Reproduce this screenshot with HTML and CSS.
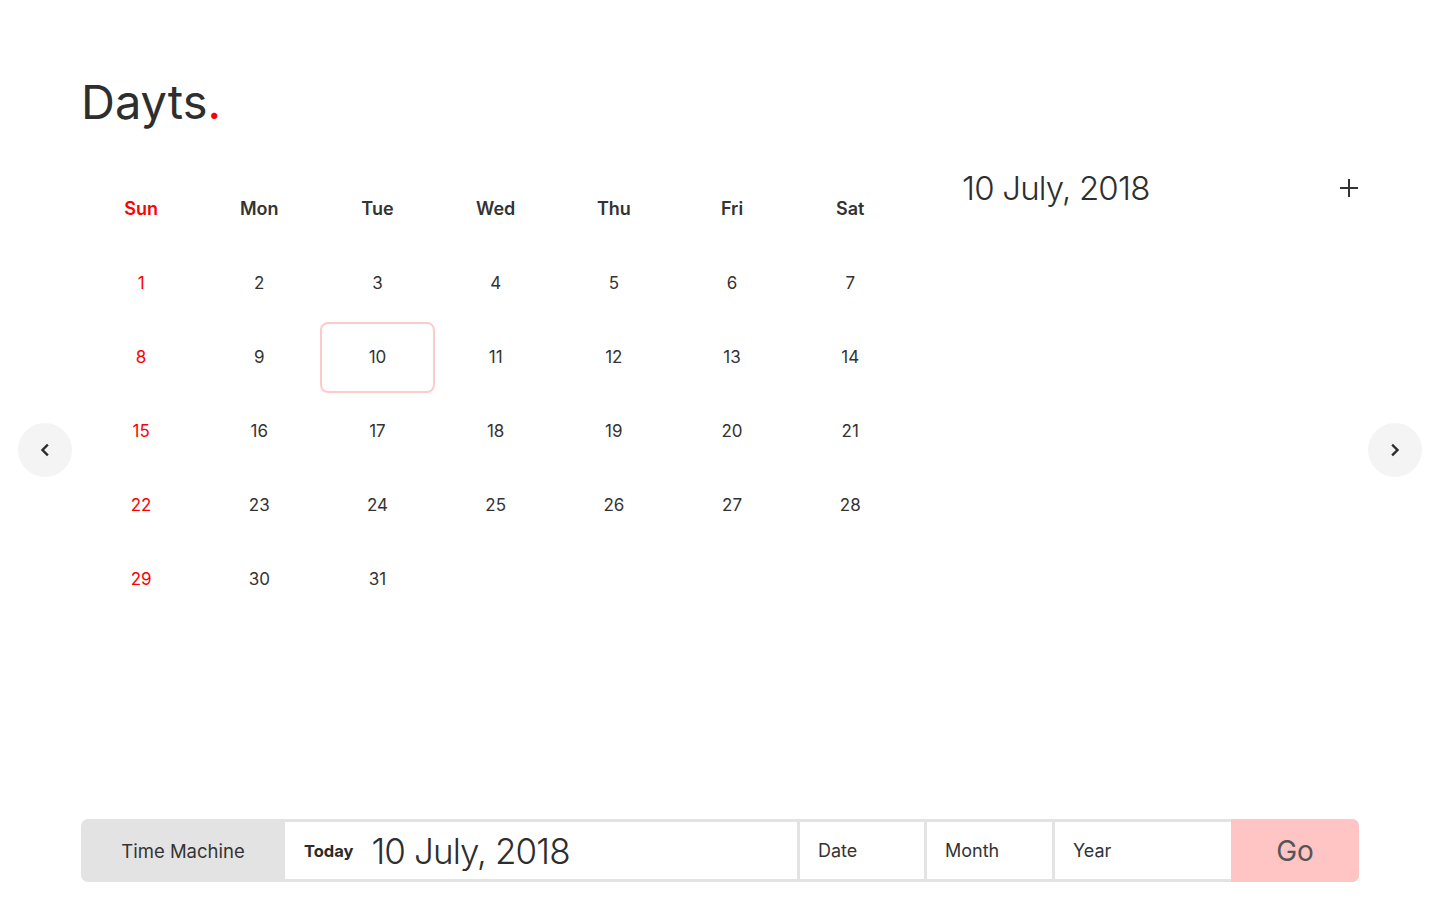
FILE: index.html
```html
<!DOCTYPE html>
<html lang="en">
<head>
<meta charset="utf-8">
<title>Dayts.</title>
<link rel="stylesheet" href="styles.css">
</head>
<body>
<div class="page">
  <button class="nav-btn" aria-label="Previous month">
    <svg width="14" height="14" viewBox="0 0 14 14"><path d="M9 2.5 L4.5 7 L9 11.5" fill="none" stroke="#2b2b2b" stroke-width="2.4" stroke-linecap="square" stroke-linejoin="miter"/></svg>
  </button>

  <main class="main">
    <h1 class="logo">Dayts<span class="dot">.</span></h1>

    <section class="content">
      <div class="calendar">
        <div class="cell head sun">Sun</div>
        <div class="cell head">Mon</div>
        <div class="cell head">Tue</div>
        <div class="cell head">Wed</div>
        <div class="cell head">Thu</div>
        <div class="cell head">Fri</div>
        <div class="cell head">Sat</div>

        <div class="cell day sun"><span>1</span></div>
        <div class="cell day"><span>2</span></div>
        <div class="cell day"><span>3</span></div>
        <div class="cell day"><span>4</span></div>
        <div class="cell day"><span>5</span></div>
        <div class="cell day"><span>6</span></div>
        <div class="cell day"><span>7</span></div>

        <div class="cell day sun"><span>8</span></div>
        <div class="cell day"><span>9</span></div>
        <div class="cell day selected"><span>10</span></div>
        <div class="cell day"><span>11</span></div>
        <div class="cell day"><span>12</span></div>
        <div class="cell day"><span>13</span></div>
        <div class="cell day"><span>14</span></div>

        <div class="cell day sun"><span>15</span></div>
        <div class="cell day"><span>16</span></div>
        <div class="cell day"><span>17</span></div>
        <div class="cell day"><span>18</span></div>
        <div class="cell day"><span>19</span></div>
        <div class="cell day"><span>20</span></div>
        <div class="cell day"><span>21</span></div>

        <div class="cell day sun"><span>22</span></div>
        <div class="cell day"><span>23</span></div>
        <div class="cell day"><span>24</span></div>
        <div class="cell day"><span>25</span></div>
        <div class="cell day"><span>26</span></div>
        <div class="cell day"><span>27</span></div>
        <div class="cell day"><span>28</span></div>

        <div class="cell day sun"><span>29</span></div>
        <div class="cell day"><span>30</span></div>
        <div class="cell day"><span>31</span></div>
      </div>

      <aside class="detail">
        <div class="detail-head">
          <h2 class="detail-date">10 July, 2018</h2>
          <button class="add-btn" aria-label="Add event">
            <svg width="20" height="20" viewBox="0 0 20 20"><path d="M10 1 V19 M1 10 H19" stroke="#333" stroke-width="2" fill="none"/></svg>
          </button>
        </div>
      </aside>
    </section>

    <form class="machine">
      <div class="machine-label">Time Machine</div>
      <div class="fields">
        <div class="field today"><span class="today-label">Today</span><span class="today-date">10 July, 2018</span></div>
        <div class="field date">Date</div>
        <div class="field month">Month</div>
        <div class="field year">Year</div>
      </div>
      <button type="button" class="go">Go</button>
    </form>
  </main>

  <button class="nav-btn" aria-label="Next month">
    <svg width="14" height="14" viewBox="0 0 14 14"><path d="M5 2.5 L9.5 7 L5 11.5" fill="none" stroke="#2b2b2b" stroke-width="2.4" stroke-linecap="square" stroke-linejoin="miter"/></svg>
  </button>
</div>
</body>
</html>
```

FILE: styles.css
```css
* { box-sizing: border-box; }

html, body {
  margin: 0;
  padding: 0;
  background: #fff;
}

body {
  font-family: Inter, "Open Sans", "Noto Sans", sans-serif;
  color: #333;
}

.page {
  display: flex;
  align-items: center;
  height: 900px;
  padding: 0 18px;
  gap: 9px;
}

.nav-btn {
  flex: 0 0 54px;
  width: 54px;
  height: 54px;
  border: none;
  border-radius: 50%;
  background: #f4f4f4;
  display: flex;
  align-items: center;
  justify-content: center;
  padding: 0;
  cursor: pointer;
}

.main {
  flex: 0 0 1278px;
  width: 1278px;
  height: 900px;
  display: flex;
  flex-direction: column;
  padding: 74px 0 18px 0;
}

.logo {
  margin: 0;
  padding-left: 0;
  font-size: 47px;
  font-weight: 400;
  line-height: 56px;
  height: 56px;
  letter-spacing: 0;
  color: #2e2e2e;
}

.logo .dot { color: #ff0000; }

.content {
  display: flex;
  margin-top: 41px;
}

.calendar {
  width: 828px;
  display: grid;
  grid-template-columns: repeat(7, 118.2px);
  grid-auto-rows: 74px;
  padding-left: 1px;
}

.cell {
  display: flex;
  align-items: center;
  justify-content: center;
}

.head {
  font-size: 18px;
  font-weight: 600;
  color: #333;
}

.day {
  font-size: 17px;
  font-weight: 400;
  color: #333;
  padding-top: 2px;
}

.sun { color: #ff0000; }

.selected span {
  display: flex;
  align-items: center;
  justify-content: center;
  width: 115px;
  height: 71px;
  border: 2px solid #ffcaca;
  border-radius: 8px;
}

.detail {
  flex: 1;
  padding-left: 53px;
}

.detail-head {
  display: flex;
  align-items: center;
  justify-content: space-between;
  height: 34px;
}

.detail-date {
  margin: 0;
  font-size: 33px;
  font-weight: 300;
  line-height: 34px;
  letter-spacing: -0.8px;
  color: #2e2e2e;
}

.add-btn {
  width: 20px;
  height: 20px;
  padding: 0;
  border: none;
  background: none;
  margin-right: 0;
  display: flex;
}

.machine {
  margin: auto 0 0 0;
  height: 63px;
  display: flex;
  background: #e3e3e3;
  border-radius: 7px;
}

.machine-label {
  flex: 0 0 204px;
  display: flex;
  align-items: center;
  justify-content: center;
  font-size: 18.5px;
  color: #333;
}

.fields {
  flex: 1;
  display: flex;
  gap: 3px;
  padding: 3px 0;
}

.field {
  background: #fff;
  display: flex;
  align-items: center;
  padding-left: 18px;
  font-size: 18px;
  color: #333;
}

.today { flex: 1; padding-left: 19px; }
.date { flex: 0 0 124px; }
.month { flex: 0 0 125px; }
.year { flex: 0 0 176px; }

.today-label {
  font-size: 16.5px;
  font-weight: 700;
  margin-right: 18px;
  color: #2b2b2b;
}

.today-date {
  font-size: 35px;
  font-weight: 300;
  letter-spacing: -0.9px;
  color: #2e2e2e;
}

.go {
  flex: 0 0 128px;
  border: none;
  background: #ffc4c4;
  border-radius: 0 7px 7px 0;
  font-family: inherit;
  font-size: 28px;
  color: #555;
  padding: 0;
  cursor: pointer;
}
```
